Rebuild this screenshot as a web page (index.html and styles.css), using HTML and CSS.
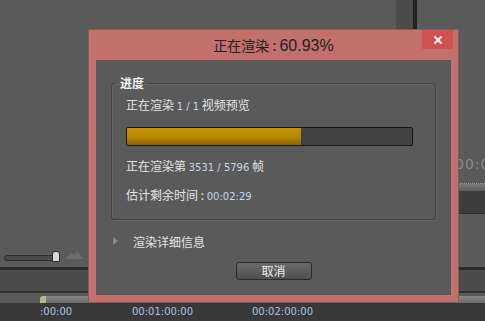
FILE: index.html
```html
<!DOCTYPE html>
<html lang="zh-CN">
  <head>
    <meta charset="UTF-8" />
    <meta name="viewport" content="width=device-width, initial-scale=1.0" />
    <title>正在渲染</title>
    <link rel="stylesheet" href="styles.css">
  </head>
  <body>
    <!-- 背后的编辑器界面 -->
    <div class="app">
      <div class="top-strip"></div>
      <div class="top-line"></div>

      <div class="side-panel">
        <div class="side-time">00:00</div>
        <div class="side-bar"></div>
        <div class="side-track"></div>
      </div>

      <div class="zoom-slider">
        <div class="slider-track"></div>
        <div class="slider-thumb"></div>
        <svg class="mountains" width="20" height="10" viewBox="0 0 20 10">
          <path d="M0 9 L6 2 L9 5 L12 1 L19 9 Z" fill="#6b6b6b" />
        </svg>
      </div>

      <div class="track-band"></div>
      <div class="ruler-bar"></div>
      <div class="ruler">
        <span class="time time-0">:00:00</span>
        <span class="time time-1">00:01:00:00</span>
        <span class="time time-2">00:02:00:00</span>
      </div>
    </div>

    <!-- 渲染对话框 -->
    <div class="dialog">
      <div class="dialog-title">
        <span>正在渲染 : <span class="title-num">60.93%</span></span>
        <button class="close-btn" type="button">
          <svg width="10" height="10" viewBox="0 0 10 10">
            <path d="M1.5 1.5 L8.5 8.5 M8.5 1.5 L1.5 8.5" stroke="#fff" stroke-width="1.8" />
          </svg>
        </button>
      </div>
      <div class="dialog-body">
        <fieldset class="group">
          <legend class="group-title">进度</legend>
          <p class="line">正在渲染 <span class="num">1 / 1</span> 视频预览</p>
          <div class="progress">
            <div class="progress-fill" style="width: 60.93%"></div>
          </div>
          <p class="line line-frame">正在渲染第 <span class="num">3531 / 5796</span> 帧</p>
          <p class="line line-time">估计剩余时间 : <span class="num">00:02:29</span></p>
        </fieldset>
        <div class="details">
          <span class="arrow"></span>
          <span>渲染详细信息</span>
        </div>
        <div class="actions">
          <button class="cancel-btn" type="button">取消</button>
        </div>
      </div>
    </div>
  </body>
</html>
```

FILE: styles.css
```css
* {
  padding: 0;
  margin: 0;
  box-sizing: border-box;
}

body {
  position: relative;
  width: 485px;
  height: 321px;
  overflow: hidden;
  font-family: "Noto Sans CJK SC", sans-serif;
  font-size: 12px;
  color: #e4e4e4;
  background-color: #5a5a5a;
}

/* 背景 */
.app {
  position: absolute;
  inset: 0;
}

.top-strip {
  position: absolute;
  top: 0;
  left: 396px;
  width: 17px;
  height: 30px;
  background: #4b4b4b;
}

.top-line {
  position: absolute;
  top: 0;
  left: 413px;
  width: 4px;
  height: 30px;
  background: #232323;
}

.side-panel {
  position: absolute;
  top: 150px;
  left: 440px;
  width: 45px;
  height: 120px;
  overflow: hidden;
}

.side-time {
  position: absolute;
  top: 6px;
  left: 15px;
  font-family: "DejaVu Sans", sans-serif;
  font-size: 14px;
  color: #8a8a8a;
  letter-spacing: 1px;
  white-space: nowrap;
}

.side-bar {
  position: absolute;
  top: 33px;
  left: 0;
  width: 45px;
  height: 8px;
  border-top: 1px dotted #9a9a9a;
  background: linear-gradient(#7a7a7a, #5c5c5c);
}

.side-track {
  position: absolute;
  top: 41px;
  left: 0;
  width: 45px;
  height: 23px;
  background: #3d3d3d;
  border-bottom: 1px solid #2e2e2e;
}

.zoom-slider {
  position: absolute;
  top: 250px;
  left: 4px;
  width: 80px;
  height: 14px;
}

.slider-track {
  position: absolute;
  top: 5px;
  left: 0;
  width: 52px;
  height: 6px;
  border: 1px solid #2f2f2f;
  border-radius: 3px;
  background: #4a4a4a;
}

.slider-thumb {
  position: absolute;
  top: 1px;
  left: 48px;
  width: 8px;
  height: 11px;
  background: #d8d8d8;
  border: 1px solid #2a2a2a;
  border-radius: 3px 3px 1px 1px;
}

.mountains {
  position: absolute;
  top: 0;
  left: 61px;
}

.track-band {
  position: absolute;
  top: 267px;
  left: 0;
  width: 485px;
  height: 26px;
  border-top: 3px solid #2c2c2c;
  border-bottom: 2px solid #2f2f2f;
  background: #4b4b4b;
}

.ruler-bar {
  position: absolute;
  top: 296px;
  left: 40px;
  width: 445px;
  height: 7px;
  border-radius: 3px 0 0 0;
  background: linear-gradient(#8a8a8a, #6a6a6a);
  border-left: 6px solid #b8b890;
}

.ruler {
  position: absolute;
  top: 303px;
  left: 0;
  width: 485px;
  height: 18px;
  background: #393939;
}

.time {
  position: absolute;
  top: 3px;
  font-family: "DejaVu Sans", sans-serif;
  font-size: 10px;
  color: #a9c4e4;
}

.time-0 {
  left: 40px;
}

.time-1 {
  left: 132px;
}

.time-2 {
  left: 252px;
}

/* 对话框 */
.dialog {
  position: absolute;
  top: 29px;
  left: 88px;
  width: 371px;
  height: 274px;
  display: flex;
  flex-direction: column;
  padding: 0 7px 7px;
  background: #c1706c;
  border: 1px solid #8e5a57;
}

.dialog-title {
  position: relative;
  display: flex;
  align-items: center;
  justify-content: center;
  height: 30px;
  font-size: 14px;
  color: #222;
}

.title-num {
  font-family: "Liberation Sans", sans-serif;
  font-size: 16px;
}

.close-btn {
  position: absolute;
  top: 0;
  right: -2px;
  width: 31px;
  height: 19px;
  display: flex;
  align-items: center;
  justify-content: center;
  border: none;
  background: #d05352;
}

.dialog-body {
  flex: 1;
  display: flex;
  flex-direction: column;
  padding: 16px 15px 0 15px;
  background: #5a5a5a;
}

.group {
  height: 144px;
  padding: 6px 22px 0 14px;
  border: 1px solid #444;
  border-radius: 3px;
  box-shadow: inset 1px 1px 0 #686868, 1px 1px 0 #666;
}

.group-title {
  margin-left: -10px;
  padding: 0 4px;
  font-weight: bold;
  font-size: 12px;
  color: #f4f4f4;
  line-height: 14px;
}

.line {
  height: 18px;
  line-height: 18px;
  white-space: nowrap;
}

.num {
  font-family: "DejaVu Sans", sans-serif;
  font-size: 10px;
  color: #c8d6e6;
}

.progress {
  height: 19px;
  margin-top: 13px;
  border: 1px solid #161616;
  border-radius: 2px;
  background: #424242;
  overflow: hidden;
}

.progress-fill {
  height: 100%;
  background: linear-gradient(#c79300, #b88600 55%, #8a6400);
}

.line-frame {
  margin-top: 11px;
}

.line-time {
  margin-top: 11px;
}

.details {
  display: flex;
  align-items: center;
  gap: 15px;
  margin-top: 12px;
  padding-left: 2px;
  height: 18px;
}

.arrow {
  width: 0;
  height: 0;
  border-left: 5px solid #8a8a8a;
  border-top: 4px solid transparent;
  border-bottom: 4px solid transparent;
}

.actions {
  display: flex;
  justify-content: center;
  margin-top: 12px;
}

.cancel-btn {
  width: 76px;
  height: 18px;
  font-family: "Noto Sans CJK SC", sans-serif;
  font-size: 12px;
  line-height: 14px;
  color: #eee;
  border: 1px solid #2a2a2a;
  border-radius: 3px;
  background: linear-gradient(#6a6a6a, #4f4f4f);
}
```
